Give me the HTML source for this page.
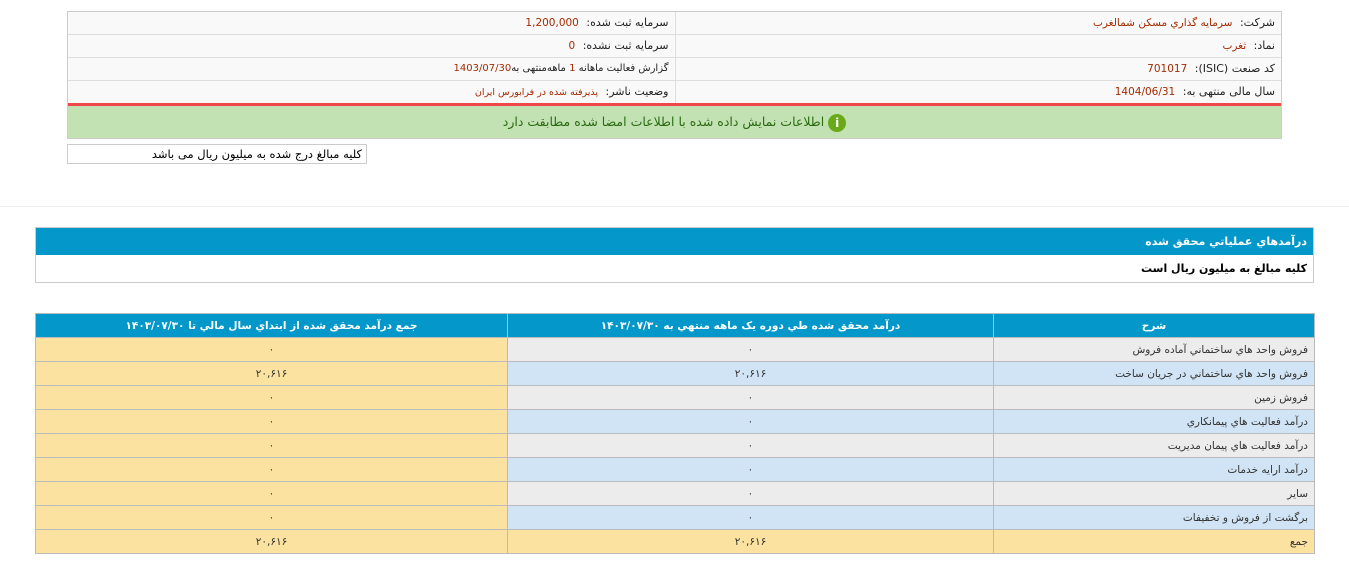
<!DOCTYPE html>
<html><head><meta charset="utf-8"><style>
body{margin:0;width:1349px;height:563px;background:#fff;font-family:Tahoma,"DejaVu Sans","Noto Sans CJK SC",sans-serif;font-size:11px;position:relative;overflow:hidden}
.abs{position:absolute;box-sizing:border-box}
.info{left:67px;top:11px;width:1215px;border:1px solid #ccc;background:#f9f9f9}
.row{height:23px;border-bottom:1px solid #ddd;display:flex;direction:rtl;box-sizing:border-box}
.row div{width:50%;padding-right:6px;line-height:22px;box-sizing:border-box;color:#222;white-space:nowrap}
.row div:first-child{border-left:1px solid #ddd}
.v{color:#a52a00;margin-right:4px;font-size:10.5px}
table{border-collapse:collapse;direction:rtl;font-size:10.5px;table-layout:fixed}
td,th{border:1px solid #bbb;height:24px;padding:0 6px;white-space:nowrap;overflow:hidden;box-sizing:border-box}
th{background:#0398c9;color:#fff;font-weight:bold}
td.c{text-align:center}
.g{background:#ececec}.b{background:#d0e4f5}.y{background:#fce2a0}
td{color:#333}
</style></head><body>
<div class="abs info">
<div class="row"><div>شرکت: <span class="v">سرمايه گذاري مسکن شمالغرب</span></div><div>سرمایه ثبت شده: <span class="v">1,200,000</span></div></div>
<div class="row"><div>نماد: <span class="v">ثغرب</span></div><div>سرمایه ثبت نشده: <span class="v">0</span></div></div>
<div class="row"><div>کد صنعت (ISIC): <span class="v">701017</span></div><div style="font-size:10px">گزارش فعالیت ماهانه <span style="color:#a52a00">1</span> ماهه‌منتهی به<span style="color:#a52a00">1403/07/30</span></div></div>
<div class="row" style="height:25px;border-bottom:3px solid #f04848"><div>سال مالی منتهی به: <span class="v">1404/06/31</span></div><div>وضعیت ناشر: <span class="v" style="font-size:9.5px">پذیرفته شده در فرابورس ایران</span></div></div>
<div style="background:#c3e2b4;height:32px;line-height:32px;text-align:center;direction:rtl;color:#2a6a10;font-size:12.5px"><span style="display:inline-block;width:18px;height:18px;border-radius:50%;background:#6aaa1a;color:#fff;line-height:18px;font-weight:bold;vertical-align:middle;font-size:12px">i</span> اطلاعات نمایش داده شده با اطلاعات امضا شده مطابقت دارد</div>
</div>
<div class="abs" style="left:67px;top:144px;width:300px;height:20px;border:1px solid #ccc;direction:rtl;padding-right:4px;line-height:18px;font-size:11.5px">کلیه مبالغ درج شده به میلیون ریال می باشد</div>
<div class="abs" style="left:0;top:206px;width:1349px;border-top:1px solid #eee"></div>
<div class="abs" style="left:35px;top:227px;width:1279px;height:56px;border:1px solid #ccc">
<div style="background:#0398c9;color:#fff;height:27px;line-height:27px;direction:rtl;padding-right:6px;font-weight:bold">درآمدهاي عملياتي محقق شده</div>
<div style="height:28px;line-height:28px;direction:rtl;padding-right:6px;font-weight:bold;color:#000">کلیه مبالغ به میلیون ریال است</div></div>
<table class="abs" style="left:35px;top:313px;width:1279px">
<colgroup><col style="width:321px"><col style="width:486px"><col style="width:472px"></colgroup>
<tr><th>شرح</th><th>درآمد محقق شده طي دوره يک ماهه منتهي به ۱۴۰۳/۰۷/۳۰</th><th>جمع درآمد محقق شده از ابتداي سال مالي تا ۱۴۰۳/۰۷/۳۰</th></tr>
<tr><td class="g">فروش واحد هاي ساختماني آماده فروش</td><td class="g c">۰</td><td class="y c">۰</td></tr>
<tr><td class="b">فروش واحد هاي ساختماني در جريان ساخت</td><td class="b c">۲۰,۶۱۶</td><td class="y c">۲۰,۶۱۶</td></tr>
<tr><td class="g">فروش زمين</td><td class="g c">۰</td><td class="y c">۰</td></tr>
<tr><td class="b">درآمد فعاليت هاي پيمانکاري</td><td class="b c">۰</td><td class="y c">۰</td></tr>
<tr><td class="g">درآمد فعاليت هاي پيمان مديريت</td><td class="g c">۰</td><td class="y c">۰</td></tr>
<tr><td class="b">درآمد ارايه خدمات</td><td class="b c">۰</td><td class="y c">۰</td></tr>
<tr><td class="g">ساير</td><td class="g c">۰</td><td class="y c">۰</td></tr>
<tr><td class="b">برگشت از فروش و تخفيفات</td><td class="b c">۰</td><td class="y c">۰</td></tr>
<tr><td class="y">جمع</td><td class="y c">۲۰,۶۱۶</td><td class="y c">۲۰,۶۱۶</td></tr>
</table>
</body></html>
